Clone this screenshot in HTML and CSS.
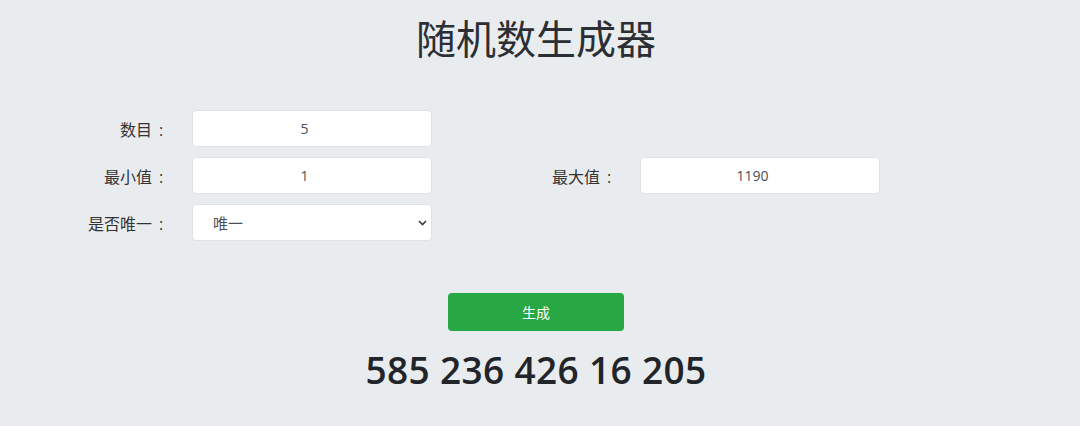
FILE: index.html
```html
<!DOCTYPE html>
<html lang="zh-CN">
<head>
    <meta charset="UTF-8">
    <meta name="viewport" content="width=device-width, initial-scale=1.0">
    <title>随机数生成器</title>
    <link rel="stylesheet" href="styles.css">
</head>
<body>
    <div class="page">
        <h1 class="title">随机数生成器</h1>

        <!-- Settings -->
        <div class="form-grid">
            <label class="field-label" for="count">数目<span class="colon">:</span></label>
            <input class="field" id="count" type="number" value="5">
            <span></span>
            <span></span>

            <label class="field-label" for="min">最小值<span class="colon">:</span></label>
            <input class="field" id="min" type="number" value="1">
            <label class="field-label" for="max">最大值<span class="colon">:</span></label>
            <input class="field" id="max" type="number" value="1190">

            <label class="field-label" for="unique">是否唯一<span class="colon">:</span></label>
            <select class="field field-select" id="unique">
                <option value="1">唯一</option>
                <option value="0">不唯一</option>
            </select>
        </div>

        <div class="actions">
            <button class="btn-generate" id="generate">生成</button>
            <div class="result" id="result">585 236 426 16 205</div>
        </div>
    </div>
</body>
</html>
```

FILE: styles.css
```css
:root {
    --background-color: #e9ecef;
    --text-color: #212529;
    --input-text: #495057;
    --border-color: #dee2e6;
    --green: #28a745;
}

body {
    margin: 0;
    background-color: var(--background-color);
    color: var(--text-color);
    font-family: "Open Sans", "Noto Sans CJK SC", sans-serif;
    font-size: 14px;
}

.page {
    width: 1072px;
    padding-top: 9px;
}

.title {
    margin: 0;
    text-align: center;
    font-size: 40px;
    font-weight: 400;
    line-height: 56px;
    font-family: "Noto Sans CJK SC", sans-serif;
    color: #2b2f33;
}

/* Form fields */
.form-grid {
    display: grid;
    grid-template-columns: 168px 240px 160px 240px;
    column-gap: 24px;
    row-gap: 10px;
    margin-top: 45px;
    align-items: center;
}

.field-label {
    text-align: right;
    font-family: "Noto Sans CJK SC", sans-serif;
    font-size: 16px;
    color: #333;
}

/* full-width cell, colon centred in it */
.colon {
    display: inline-block;
    width: 16px;
    padding-left: 2px;
    box-sizing: border-box;
    text-align: center;
    font-family: "Open Sans", sans-serif;
}

.field {
    box-sizing: border-box;
    height: 37px;
    border: 1px solid var(--border-color);
    border-radius: 4px;
    background: #fff;
    color: var(--input-text);
    font-family: "Open Sans", "Noto Sans CJK SC", sans-serif;
    font-size: 14px;
    text-align: center;
    outline: none;
}

.field-select {
    appearance: none;
    -webkit-appearance: none;
    text-align: left;
    padding-left: 20px;
    font-size: 15px;
    background-image: url("data:image/svg+xml,%3Csvg xmlns='http://www.w3.org/2000/svg' width='9' height='6' viewBox='0 0 9 6'%3E%3Cpath d='M1 1l3.5 3.5L8 1' fill='none' stroke='%23343a40' stroke-width='1.6'/%3E%3C/svg%3E");
    background-repeat: no-repeat;
    background-position: right 4px center;
}

/* Generate button and output */
.actions {
    display: flex;
    flex-direction: column;
    align-items: center;
    margin-top: 52px;
}

.btn-generate {
    width: 176px;
    height: 38px;
    border: none;
    border-radius: 4px;
    background-color: var(--green);
    color: #fff;
    font-family: "Noto Sans CJK SC", sans-serif;
    font-size: 14px;
    cursor: pointer;
}

.result {
    margin-top: 14px;
    font-size: 37px;
    font-weight: 600;
    letter-spacing: 0.35px;
    line-height: 50px;
    color: var(--text-color);
}
```
